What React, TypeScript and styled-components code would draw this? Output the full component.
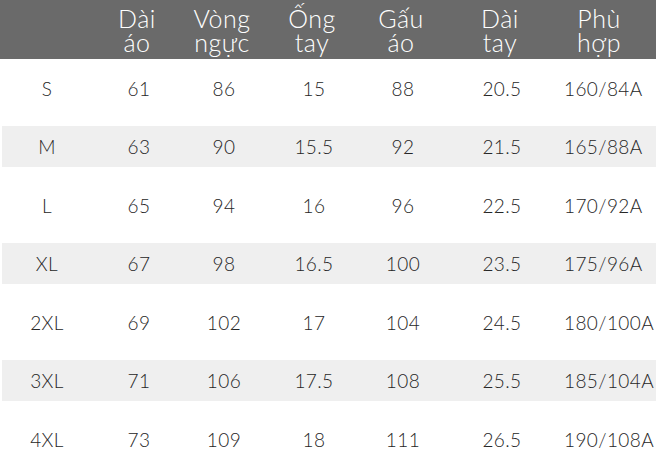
import React from "react";
import styled, { createGlobalStyle } from "styled-components";

const GlobalStyle = createGlobalStyle`
  html, body {
    margin: 0;
    padding: 0;
    background: #ffffff;
  }
  body {
    font-family: Lato, "Noto Sans", sans-serif;
  }
`;

const COLUMNS = "90px 94px 76px 104px 74px 124px 74px 1fr";

const Table = styled.div`
  width: 656px;
  height: 473px;
  overflow: hidden;
  background: #ffffff;
`;

const Header = styled.div`
  display: grid;
  grid-template-columns: ${COLUMNS};
  align-items: center;
  height: 59px;
  background: #6a6a6a;
  color: #ffffff;
`;

const HeadCell = styled.div`
  display: flex;
  flex-direction: column;
  align-items: center;
  font-size: 25px;
  font-weight: 300;
  line-height: 24px;
  letter-spacing: 0.5px;
  white-space: nowrap;
  padding-top: 1px;
`;

const Row = styled.div`
  height: 58.5px;
  padding: 8.75px 0 8.75px 2px;
  box-sizing: border-box;
`;

const Band = styled.div<{ $striped: boolean }>`
  display: grid;
  grid-template-columns: ${COLUMNS};
  align-items: center;
  height: 41px;
  margin-left: -2px;
  padding-left: 2px;
  background: ${({ $striped }) => ($striped ? "#efefef" : "transparent")};
  background-clip: content-box;
`;

const Cell = styled.div`
  text-align: center;
  font-size: 19px;
  font-weight: 300;
  letter-spacing: 0.4px;
  color: #262626;
  white-space: nowrap;
`;

const headers = [
  ["", ""],
  ["Dài", "áo"],
  ["Vòng", "ngực"],
  ["Ống", "tay"],
  ["Gấu", "áo"],
  ["Dài", "tay"],
  ["Phù", "hợp"],
];

const rows = [
  ["S", "61", "86", "15", "88", "20.5", "160/84A"],
  ["M", "63", "90", "15.5", "92", "21.5", "165/88A"],
  ["L", "65", "94", "16", "96", "22.5", "170/92A"],
  ["XL", "67", "98", "16.5", "100", "23.5", "175/96A"],
  ["2XL", "69", "102", "17", "104", "24.5", "180/100A"],
  ["3XL", "71", "106", "17.5", "108", "25.5", "185/104A"],
  ["4XL", "73", "109", "18", "111", "26.5", "190/108A"],
];

export default function App() {
  return (
    <>
      <GlobalStyle />
      <Table>
        <Header>
          {headers.map(([a, b], i) => (
            <HeadCell key={i}>
              <span>{a}</span>
              <span>{b}</span>
            </HeadCell>
          ))}
        </Header>
        {rows.map((row, i) => (
          <Row key={row[0]}>
            <Band $striped={i % 2 === 1}>
              {row.map((v, j) => (
                <Cell key={j}>{v}</Cell>
              ))}
            </Band>
          </Row>
        ))}
      </Table>
    </>
  );
}
